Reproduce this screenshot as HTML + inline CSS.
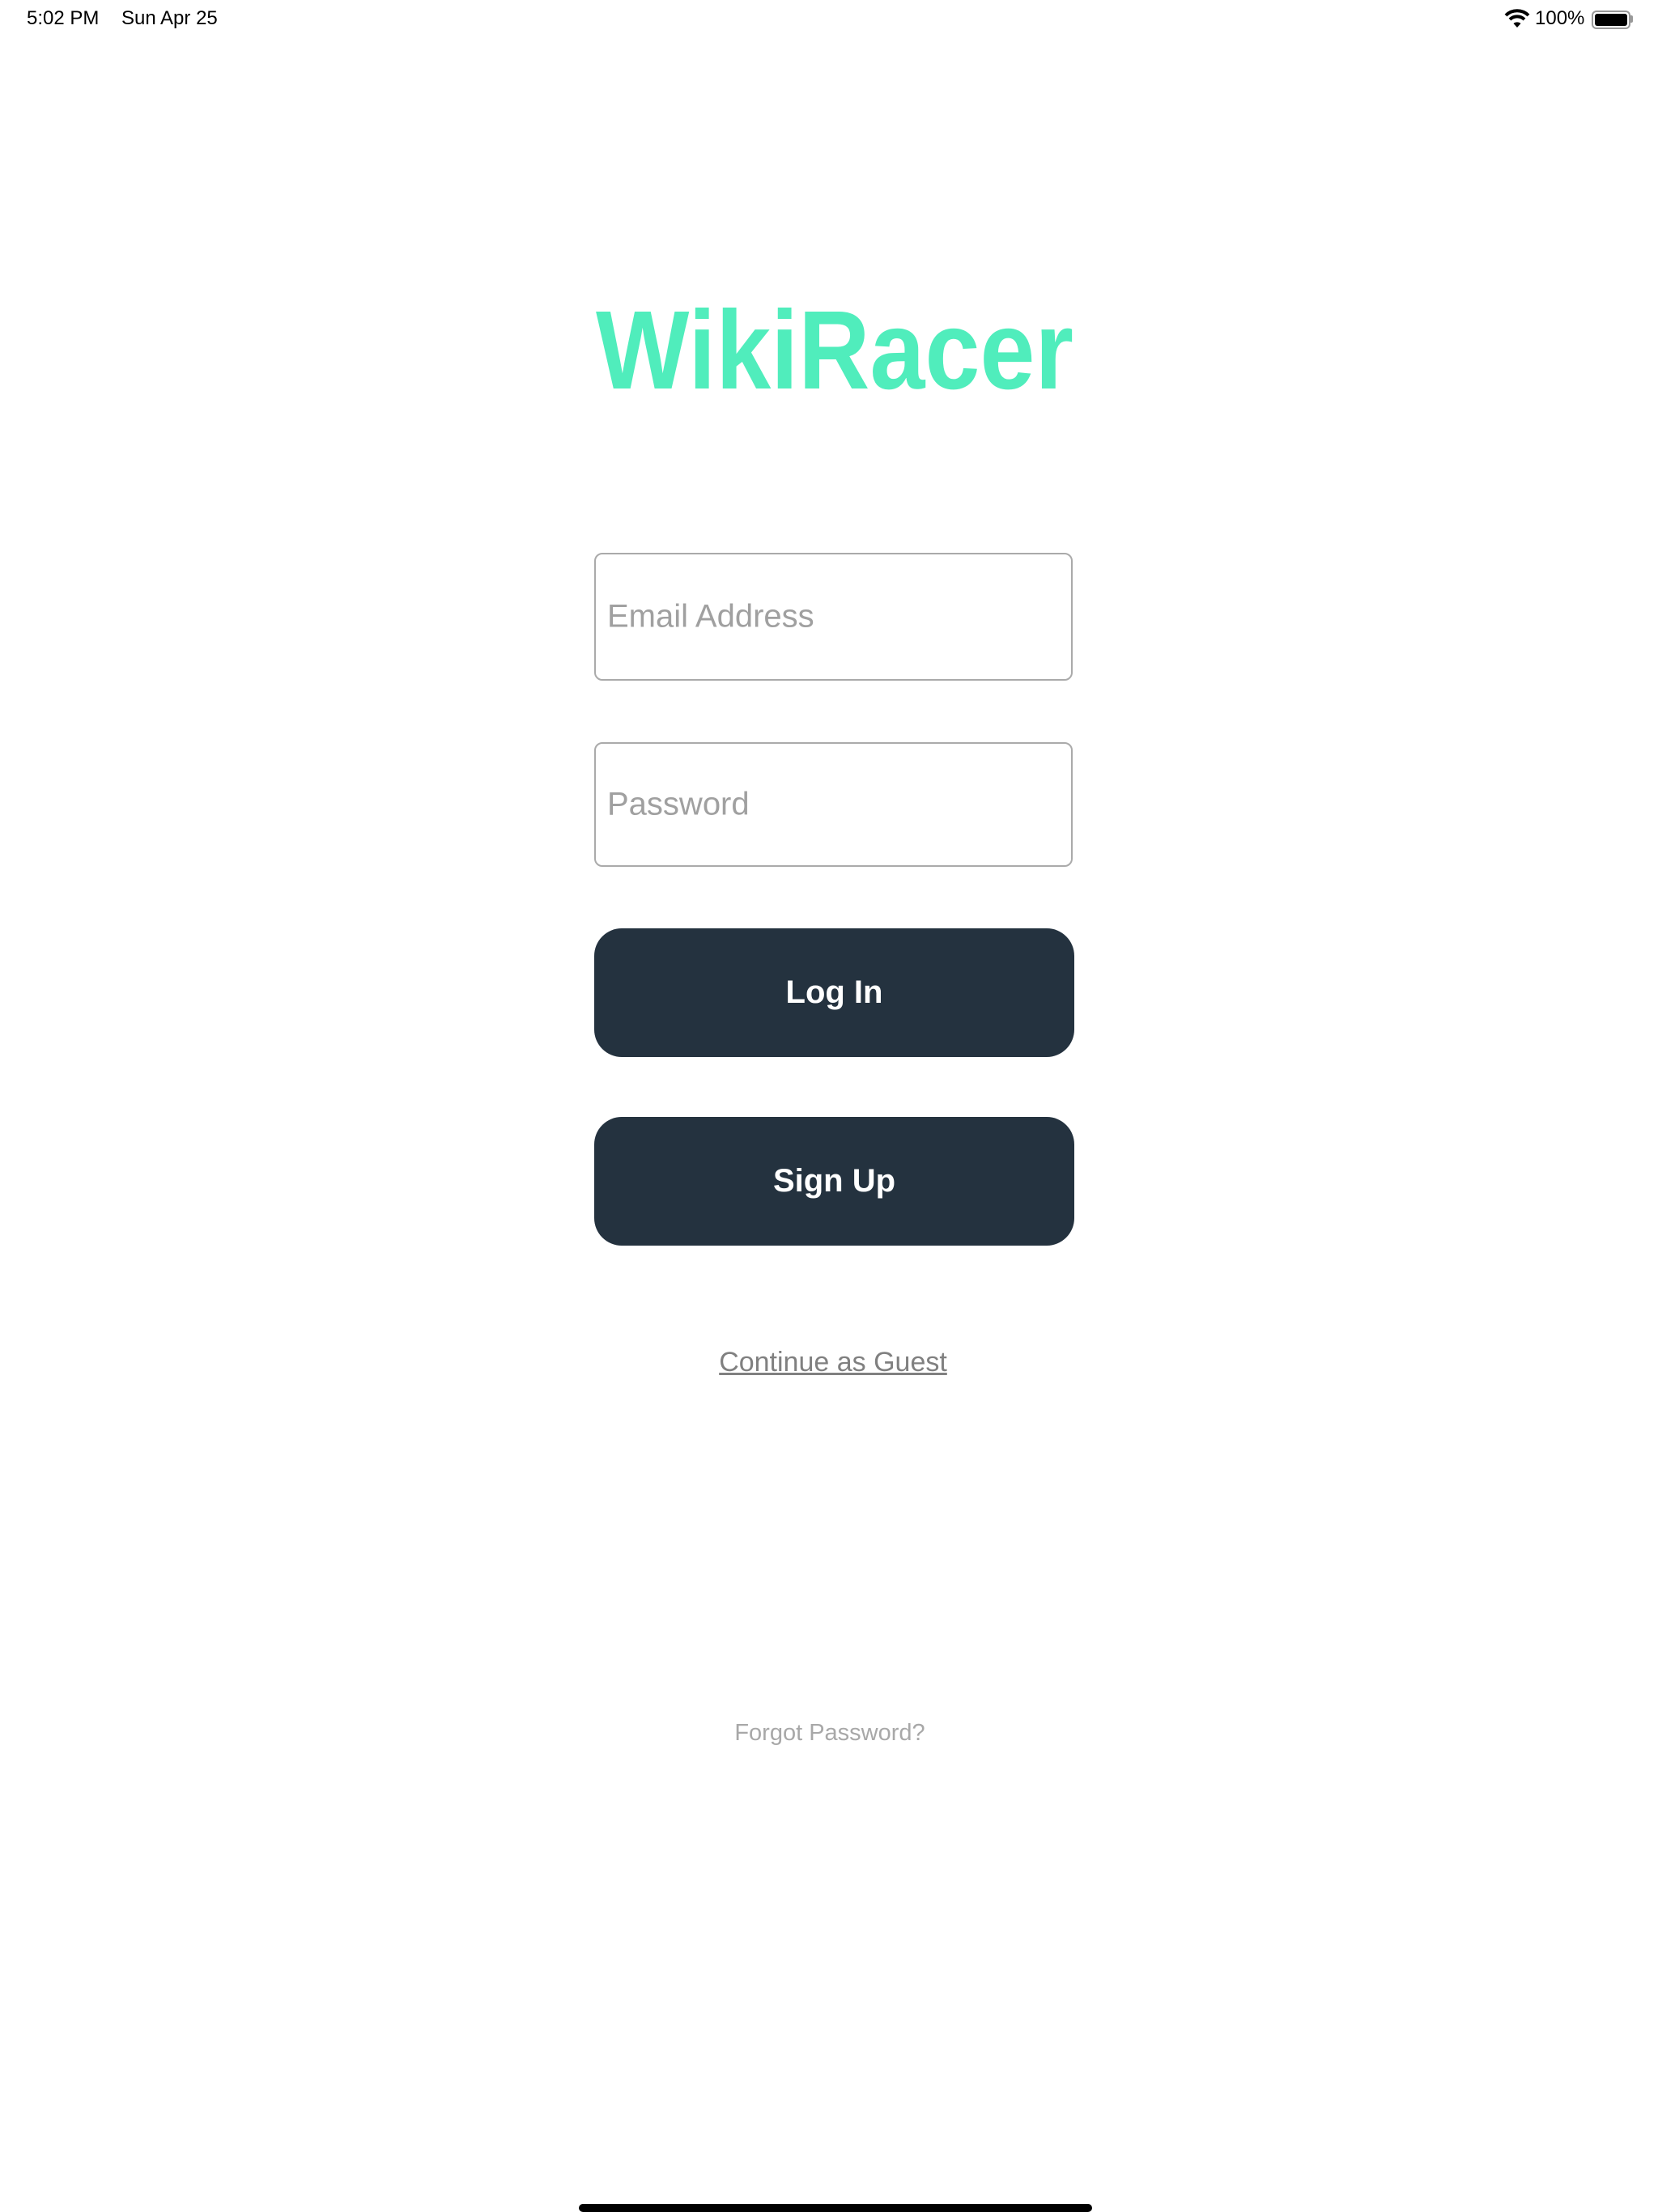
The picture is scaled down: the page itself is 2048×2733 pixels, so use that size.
<!DOCTYPE html>
<html><head><meta charset="utf-8">
<style>
html,body{margin:0;padding:0;background:#fff;}
body{width:2048px;height:2732px;position:relative;overflow:hidden;font-family:"Liberation Sans",sans-serif;}
.abs{position:absolute;}
.field{position:absolute;left:734px;width:591px;border:2px solid #aaa;border-radius:10px;box-sizing:border-box;}
.field span{position:absolute;left:14px;top:50%;transform:translateY(-50%);font-size:40px;color:#a0a0a0;}
.btn{position:absolute;left:734px;width:593px;height:159px;background:#24323f;border-radius:34px;color:#fff;font-weight:bold;font-size:40px;display:flex;align-items:center;justify-content:center;}
</style></head><body>
<div class="abs" style="left:33px;top:9px;font-size:24px;color:#000;">5:02 PM</div>
<div class="abs" style="left:150px;top:9px;font-size:24px;color:#000;">Sun Apr 25</div>
<svg class="abs" style="left:1858px;top:10px" width="32" height="26" viewBox="0 0 32 26">
<path d="M2 9 A20 20 0 0 1 30 9" stroke="#000" stroke-width="4" fill="none"/>
<path d="M7 14 A13 13 0 0 1 25 14" stroke="#000" stroke-width="4" fill="none"/>
<path d="M11.5 19 A7 7 0 0 1 20.5 19 L16 24 Z" fill="#000"/>
</svg>
<div class="abs" style="left:1896px;top:9px;font-size:24px;color:#000;">100%</div>
<div class="abs" style="left:1966px;top:13px;width:44px;height:19px;border:2px solid #999;border-radius:6px;padding:0;"><div style="margin:2px;height:15px;background:#000;border-radius:3px;"></div></div>
<div class="abs" style="left:2014px;top:19px;width:3px;height:9px;background:#999;border-radius:0 2px 2px 0;"></div>

<svg class="abs" style="left:730px;top:370px" width="610" height="130">
<text x="6" y="110" font-family="Liberation Sans" font-weight="bold" font-size="138" fill="#50edbc" textLength="590" lengthAdjust="spacingAndGlyphs">WikiRacer</text>
</svg>

<div class="field" style="top:683px;height:158px;"><span>Email Address</span></div>
<div class="field" style="top:917px;height:154px;"><span>Password</span></div>
<div class="btn" style="top:1147px;">Log In</div>
<div class="btn" style="top:1380px;">Sign Up</div>
<div class="abs" style="left:0;width:2058px;top:1664px;text-align:center;font-size:34px;color:#808080;text-decoration:underline;">Continue as Guest</div>
<div class="abs" style="left:0;width:2050px;top:2125px;text-align:center;font-size:29px;color:#a8a8a8;">Forgot Password?</div>
<div class="abs" style="left:715px;top:2723px;width:634px;height:10px;background:#000;border-radius:5px;"></div>
</body></html>
